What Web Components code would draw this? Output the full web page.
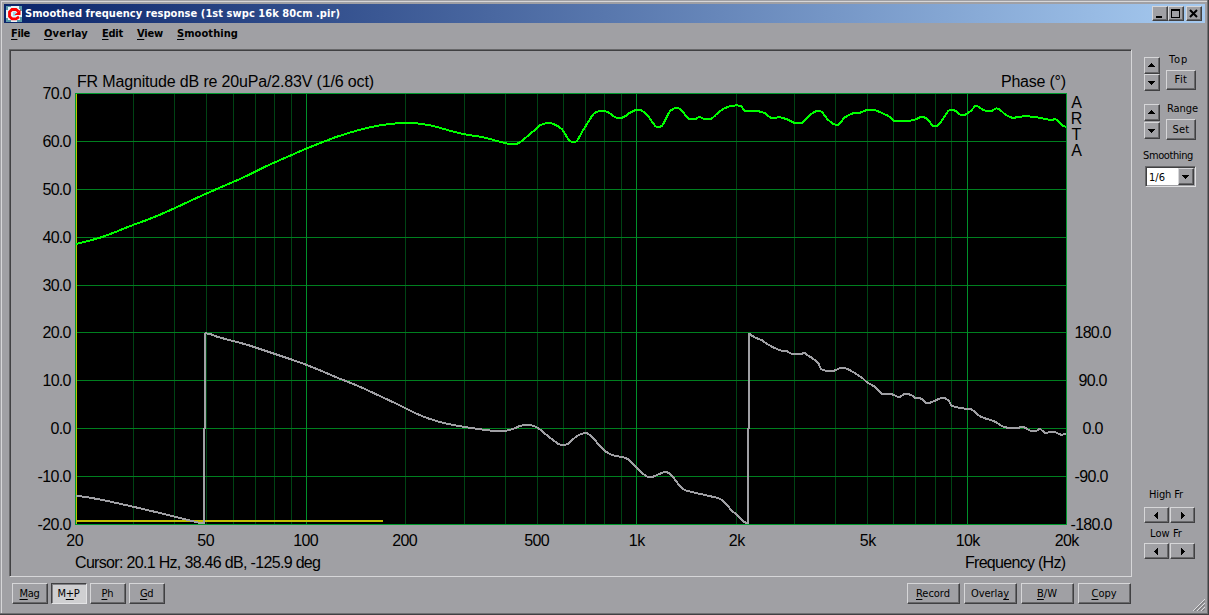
<!DOCTYPE html>
<html lang="en">
<head>
<meta charset="utf-8">
<title>Smoothed frequency response</title>
<style>
  html, body { margin: 0; height: 100%; overflow: hidden; background: #a0a0a4; }
</style>
</head>
<body>
<fr-window></fr-window>

<script>
const define = (name, html, setup) => {
  const template = document.createElement('template');
  template.innerHTML = html;
  customElements.define(name, class extends HTMLElement {
    constructor() {
      super();
      this.attachShadow({ mode: 'open' }).appendChild(template.content.cloneNode(true));
    }
    connectedCallback() {
      if (setup) setup(this, this.shadowRoot);
    }
  });
};

// Label that spaces its letters to fill the given width
define('ui-label', `<style>
    :host { display: inline-block; white-space: nowrap; line-height: 14px; }
    ::slotted(u) { text-decoration: underline; text-underline-offset: 2px; text-decoration-thickness: 1px; text-decoration-skip-ink: none; }
  </style><slot></slot>`, (host) => {
  const width = Number(host.getAttribute('width'));
  if (!width) return;
  const natural = host.getBoundingClientRect().width;
  const spacing = (width - natural) / host.textContent.length;
  host.style.letterSpacing = spacing + 'px';
});

// Raised push button
define('ui-button', `<style>
    :host {
      display: flex; align-items: center; justify-content: center;
      box-sizing: border-box; flex: none; background: #a0a0a4;
      border: 1px solid; border-color: #d6d6d8 #404042 #404042 #d6d6d8;
      box-shadow: inset -1px -1px #68686a;
    }
    :host([pressed]) {
      background: #cfcfd1; border-color: #404042 #e4e4e6 #e4e4e6 #404042;
      box-shadow: inset 1px 1px #808084;
    }
  </style><slot></slot>`);

// Small triangle used on spinners and scroll buttons
define('ui-arrow', `<style>
    :host { display: block; width: 7px; height: 7px; margin-right: 1px; }
    svg { display: block; }
    :host([dir=down]) svg { transform: rotate(180deg); }
    :host([dir=left]) svg { transform: rotate(-90deg); }
    :host([dir=right]) svg { transform: rotate(90deg); }
  </style><svg width="7" height="7"><path d="M3 1h1v1h1v1h1v1h1v1H0V4h1V3h1V2h1z"/></svg>`);

define('ui-spinner', `<style>
    :host { display: grid; align-content: start; gap: var(--spinner-gap, 0px); width: 16px; }
    ui-button { width: 16px; height: 17px; }
  </style>
  <ui-button><ui-arrow></ui-arrow></ui-button>
  <ui-button><ui-arrow dir="down"></ui-arrow></ui-button>`);

define('ui-pager', `<style>
    :host { display: flex; gap: 1px; }
    ui-button { width: 25px; height: 16px; }
  </style>
  <ui-button><ui-arrow dir="left"></ui-arrow></ui-button>
  <ui-button><ui-arrow dir="right"></ui-arrow></ui-button>`);

define('ui-select', `<style>
    :host {
      display: flex; justify-content: space-between; box-sizing: border-box;
      width: 51px; height: 21px; padding: 1px; background: #fff;
      border: 1px solid; border-color: #68686a #e0e0e2 #e0e0e2 #68686a;
      box-shadow: inset 1px 1px #404042, inset -1px -1px #a0a0a4;
    }
    span { padding: 3px 0 0 2px; }
    ui-button { width: 16px; height: 17px; }
  </style>
  <span><slot></slot></span>
  <ui-button><ui-arrow dir="down"></ui-arrow></ui-button>`);

define('title-bar', `<style>
    :host {
      display: flex; align-items: center; height: 19px; box-sizing: border-box;
      padding: 0 3px 0 2px; color: #fff; font-weight: bold;
      background: linear-gradient(90deg, #0a246a, #a6caf0);
    }
    .icon { display: block; flex: none; margin-right: 3px; }
    .caption { flex: 1; padding-top: 1px; }
    .buttons { display: flex; }
    ui-button { width: 16px; height: 15px; }
    .close { margin-left: 2px; }
    .buttons svg { display: block; }
  </style>
  <svg class="icon" width="16" height="16">
    <rect width="16" height="16" fill="#e8f4f8"/>
    <path d="M0 0h5v1H2v3H0zM13 0h3v5h-2V3h-1zM0 12h2v2h3v2H0zM11 14h3v-3h2v5h-5z" fill="#5a9aaa"/>
    <path d="M7 6h3v4H7z" fill="#9adbe8"/>
    <path d="M12.500 5.500L10 3.500H6L3.500 6v4.500L6 12.800h4l3-2" fill="none" stroke="#f00" stroke-width="2.800"/>
    <path d="M14.500 3.500V9H8.500z" fill="#f00"/>
  </svg>
  <span class="caption"><slot></slot></span>
  <div class="buttons">
    <ui-button><svg width="12" height="11"><path d="M2 8h6v2H2z"/></svg></ui-button>
    <ui-button><svg width="12" height="11"><path d="M1 1h9v9H1zM2 3v6h7V3z" fill-rule="evenodd"/></svg></ui-button>
    <ui-button class="close"><svg width="12" height="11"><path d="M2 2l7 7M9 2L2 9" stroke="#000" stroke-width="2"/></svg></ui-button>
  </div>`);

define('menu-bar', `<style>
    :host { display: flex; gap: 14px; padding: 4px 0 0 7px; height: 23px; box-sizing: border-box; font-weight: bold; }
  </style>
  <ui-label width="19"><u>F</u>ile</ui-label>
  <ui-label width="44"><u>O</u>verlay</ui-label>
  <ui-label width="21"><u>E</u>dit</ui-label>
  <ui-label width="26"><u>V</u>iew</ui-label>
  <ui-label width="61"><u>S</u>moothing</ui-label>`);

// Magnitude and phase samples, in window coordinates
const MAGNITUDE = `76,244 90,240.500 103,236.700 118,231 133,225 152,218 174,208.500 190,201 206,193.700 230,183.300 243,177.600 255,171.700 270,164.500 291,155.300 306,148.700 323,142 337,136.700 360,129.700 378,125.700 397,123.300 413,123 430,125.300 450,130.700 465,134.300 483,137.300 502,142.300 510,144 517,143.700 522,140.700 530,134 537,128.300 540,125.300 548,123 555,124.700 562,129.300 568,138.700 572,142 577,140.700 582,132 592,116 595,112.700 602,110.700 608,112.300 615,117 619,118 624,117 630,112.700 637,109.700 641,110.300 647,114.700 655,125.700 658,127 662,125.700 665,120.700 670,111.300 677,107.700 682,111 688,118.300 692,119.300 696,119 699,117 704,118.700 711,119 717,113.700 725,108 735,105.500 741,106.300 745,110.700 757,111 765,113.300 771,118 776,118.300 778,117 787,119.300 794,122.700 802,122.700 805,120 811,114 818,110.700 822,112.300 827,118.700 833,123.700 837,125 839,124.300 845,117.300 853,113.300 860,112.700 867,110 874,110 882,113 890,117 894,120.700 908,121 916,119.300 922,116.700 927,119 933,125.700 937,125.700 942,120.300 948,111.300 952,109.700 956,111.300 961,115 965,114.700 971,110.700 976,105.700 980,108 986,111 992,111 995,108.700 999,109 1005,114.300 1013,118 1018,116.700 1033,116.700 1047,119.300 1052,120.300 1055,119 1058,121 1063,125.700 1066,126.700`;
// One entry per phase wrap
const PHASE = [
  `76,495.500 100,499.500 133,506.700 167,514.700 187,519.700 200,523 204,523.300`,
  `205,333.300 210,334 217,336.700 233,341 250,345.700 274,353.700 292,359.700 306,364.700 320,370.300 338,378 357,385.500 382,397 400,405.500 415,413 430,419 447,423.700 465,427 490,430.500 503,431 512,429.300 520,426 527,424.700 533,425.700 538,428 545,433.700 558,443.700 563,445 568,443.700 577,436 585,433 590,435 598,443.700 605,451 613,455.300 622,457 628,459.300 636,466.700 643,473.700 648,477 653,476.700 660,473.700 666,472 671,474.700 677,482.300 683,489 693,492.300 708,495.700 720,499 727,504.700 732,511 737,514.700 744,521.700 748,523.300`,
  `749,333.300 754,337 762,340.300 767,344 780,350.300 787,351.300 792,354 802,354 804,352.700 807,354.700 818,362.700 821,369 827,370.700 834,370.700 842,367.700 850,370.300 862,377.700 867,382.300 874,386.300 882,393.700 892,394.300 899,397 905,394 911,395 915,397.700 922,399 926,403 932,402 942,398 948,400 952,405.700 965,408.700 971,409 980,416.300 995,421.700 1004,427 1017,428 1023,427 1031,431 1036,431 1040,429 1045,432.700 1054,431.700 1061,434.700 1066,433.700`
];

// Cubic path through the samples, with each tangent taken from its neighbours
function smoothPath(samples) {
  const points = samples.split(' ').map((pair) => pair.split(',').map(Number));
  const slope = (i) => {
    const a = points[Math.max(i - 1, 0)];
    const b = points[Math.min(i + 1, points.length - 1)];
    return (b[1] - a[1]) / (b[0] - a[0]);
  };
  let path = `M${points[0]}`;
  for (let i = 1; i < points.length; i++) {
    const [x0, y0] = points[i - 1];
    const [x1, y1] = points[i];
    const step = (x1 - x0) / 3;
    path += `C${x0 + step} ${y0 + slope(i - 1) * step} ${x1 - step} ${y1 - slope(i) * step} ${x1} ${y1}`;
  }
  return path;
}

define('fr-chart', `<style>
    :host {
      display: block; box-sizing: border-box; width: 1123px; height: 528px;
      border: 1px solid; border-color: #68686a #d6d6d8 #d6d6d8 #68686a;
      box-shadow: inset 1px 1px #404042;
    }
    svg { display: block; font: 16px "Liberation Sans", Arial, sans-serif; }
    .lines { shape-rendering: crispEdges; }
  </style>
  <svg width="1121" height="526" viewBox="10 50 1121 526">
    <g class="lines">
      <rect x="75" y="93" width="992" height="432"/>
      <g id="grid"></g>
      <path d="M75.5 94V525M1066.500 94V525M75 93.500H1067M75 524.500H1067" stroke="#009a2e" fill="none"/>
      <path d="M76.500 94V524" stroke="#c0c000"/>
      <path d="M77 521H383" stroke="#c0c000" stroke-width="2"/>
      <g fill="none" stroke-width="2">
        <path d="${PHASE.map(smoothPath).join('')}M204 524V428M205 429V333M748 524V428M749 429V333" stroke="#a0a0a4"/>
        <path d="${smoothPath(MAGNITUDE)}" stroke="#00ff00"/>
      </g>
    </g>
    <text x="77" y="87" textLength="297">FR Magnitude dB re 20uPa/2.83V (1/6 oct)</text>
    <text x="1001" y="87" textLength="65">Phase (°)</text>
    <text x="75" y="568" textLength="246">Cursor: 20.1 Hz, 38.46 dB, -125.9 deg</text>
    <text x="965" y="568" textLength="101">Frequency (Hz)</text>
    <g id="labels"></g>
  </svg>`, (host, root) => {
  const grid = [];
  for (const x of [133, 174, 206, 233, 255, 274, 291, 405, 464, 505, 537, 563, 585, 604, 621, 736, 794, 835, 867, 893, 915, 935, 951]) {
    grid.push(`<path d="M${x + 0.5} 94V524" stroke="#004314"/>`);
  }
  for (const y of [141, 189, 237, 285, 332, 380, 428, 476]) {
    grid.push(`<path d="M76 ${y + 0.5}H1066" stroke="#007f1f"/>`);
  }
  for (const x of [306, 636, 967]) {
    grid.push(`<path d="M${x + 0.5} 94V524" stroke="#00902a"/>`);
  }
  root.getElementById('grid').innerHTML = grid.join('');

  const labels = [];
  const text = (x, y, value, anchor, width) =>
    labels.push(`<text x="${x}" y="${y}" text-anchor="${anchor}" textLength="${width}">${value}</text>`);
  [93, 141, 189, 237, 285, 332, 380, 428, 476, 524].forEach((y, i) => {
    const value = (70 - i * 10).toFixed(1);
    text(71.5, y + 6, value, 'end', { 3: 21, 4: 29, 5: 34 }[value.length]);
  });
  text(1111.5, 338, '180.0', 'end', 37);
  text(1107.5, 386, '90.0', 'end', 29);
  text(1103.5, 434, '0.0', 'end', 21);
  text(1108.5, 482, '-90.0', 'end', 34);
  text(1112.5, 530, '-180.0', 'end', 42);
  [[75, '20', 17.5], [206, '50', 17.5], [306, '100', 25.5], [405, '200', 25.5], [537, '500', 25.5], [637, '1k', 16.5],
    [737, '2k', 16.5], [868, '5k', 16.5], [968, '10k', 24.5], [1067, '20k', 24.5]]
    .forEach(([x, value, width]) => text(x, 546, value, 'middle', width));
  'ARTA'.split('').forEach((letter, i) => text(1076.5, 108 + i * 16, letter, 'middle', 11));
  root.getElementById('labels').innerHTML = labels.join('');
});

define('side-panel', `<style>
    :host { display: flex; flex-direction: column; width: 56px; }
    .row { display: grid; grid-template-columns: 16px 30px; column-gap: 6px; }
    .stack { display: flex; flex-direction: column; align-items: flex-start; }
    .stack > ui-label { height: 14px; }
    .stack > ui-button { width: 30px; }
    .top { height: 43px; }
    .top ui-spinner { margin-top: 9px; }
    .top .stack > ui-label { margin: 5px 0 0 3px; }
    .top .stack > ui-button { height: 20px; margin-top: 3px; }
    .range { height: 49px; --spinner-gap: 1px; }
    .range ui-spinner { margin-top: 13px; }
    .range .stack > ui-label { margin: 11px 0 0 1px; }
    .range .stack > ui-button { height: 21px; margin-top: 3px; }
    .smooth { height: 14px; margin: 9px 0 3px -1px; }
    ui-select { margin-left: 1px; }
    .freq { margin-top: auto; }
    .freq div { height: 14px; }
    .high { margin: 0 0 5px 5px; }
    .low { margin: 4px 0 2px 6px; }
  </style>
  <div class="row top">
    <ui-spinner></ui-spinner>
    <div class="stack"><ui-label width="19">Top</ui-label><ui-button><ui-label width="13">Fit</ui-label></ui-button></div>
  </div>
  <div class="row range">
    <ui-spinner></ui-spinner>
    <div class="stack"><ui-label width="31">Range</ui-label><ui-button><ui-label width="17">Set</ui-label></ui-button></div>
  </div>
  <div class="smooth"><ui-label width="50">Smoothing</ui-label></div>
  <ui-select><ui-label width="16">1/6</ui-label></ui-select>
  <div class="freq">
    <div class="high"><ui-label width="34">High Fr</ui-label></div>
    <ui-pager></ui-pager>
    <div class="low"><ui-label width="32">Low Fr</ui-label></div>
    <ui-pager></ui-pager>
  </div>`);

define('bottom-bar', `<style>
    :host { display: flex; justify-content: space-between; width: 1119px; }
    div { display: flex; gap: 3px; }
    ui-button { width: 36px; height: 21px; }
    .right { gap: 4px; }
    .right ui-button { width: 53px; }
    ui-button ui-label { margin-right: 1px; }
  </style>
  <div>
    <ui-button><ui-label width="20"><u>M</u>ag</ui-label></ui-button>
    <ui-button pressed><ui-label width="22">M<u>+</u>P</ui-label></ui-button>
    <ui-button><ui-label width="12"><u>P</u>h</ui-label></ui-button>
    <ui-button><ui-label width="13"><u>G</u>d</ui-label></ui-button>
  </div>
  <div class="right">
    <ui-button><ui-label width="34"><u>R</u>ecord</ui-label></ui-button>
    <ui-button><ui-label width="38">Overla<u>y</u></ui-label></ui-button>
    <ui-button><ui-label width="20"><u>B</u>/W</ui-label></ui-button>
    <ui-button><ui-label width="25"><u>C</u>opy</ui-label></ui-button>
  </div>`);

define('fr-window', `<style>
    :host {
      display: flex; flex-direction: column; position: relative; box-sizing: border-box;
      width: 1209px; height: 615px; padding: 4px; background: #a0a0a4; color: #000;
      font: 11px/14px "DejaVu Sans Condensed", "DejaVu Sans", sans-serif;
      box-shadow: inset -1px -1px #404042, inset -2px -2px #707073, inset 1px 1px #a0a0a4, inset 2px 2px #d6d6d8;
    }
    .main { display: flex; justify-content: space-between; height: 528px; padding: 0 5px; margin-top: 3px; }
    side-panel { height: 511px; margin-top: -1px; }
    bottom-bar { margin: 6px 0 0 8px; }
    .grip { position: absolute; right: 4px; bottom: 4px; }
  </style>
  <title-bar><ui-label width="315">Smoothed frequency response (1st swpc 16k 80cm .pir)</ui-label></title-bar>
  <menu-bar></menu-bar>
  <div class="main"><fr-chart></fr-chart><side-panel></side-panel></div>
  <bottom-bar></bottom-bar>
  <svg class="grip" width="12" height="12">
    <path d="M0 12L12 0M4 12L12 4M8 12L12 8" stroke="#dedee0"/>
    <path d="M1.500 12L12 1.500M5.500 12L12 5.500M9.500 12L12 9.500" stroke="#68686a"/>
  </svg>`);
</script>
</body>
</html>
